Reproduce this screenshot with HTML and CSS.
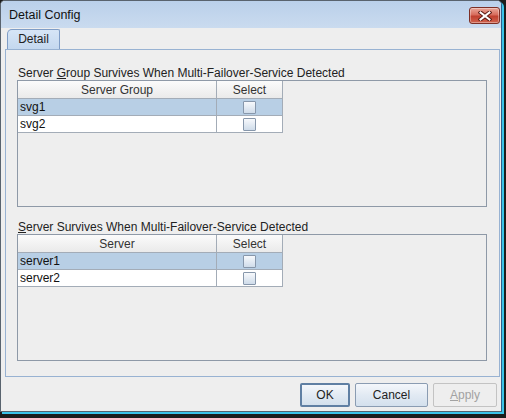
FILE: index.html
```html
<!DOCTYPE html>
<html>
<head>
<meta charset="utf-8">
<link rel="stylesheet" href="styles.css">
</head>
<body>
<div class="window">
  <div class="titlebar">
    <span class="title">Detail Config</span>
    <button class="close" aria-label="Close">
      <svg width="14" height="10" viewBox="0 0 14 10">
        <path d="M2.5 1.5 L11.5 8.5 M11.5 1.5 L2.5 8.5" stroke="#5a1a14" stroke-width="4" stroke-linecap="square" fill="none"/>
        <path d="M2.5 1.5 L11.5 8.5 M11.5 1.5 L2.5 8.5" stroke="#ffffff" stroke-width="2" stroke-linecap="square" fill="none"/>
      </svg>
    </button>
  </div>
  <div class="content">
    <div class="tabs">
      <div class="tab">Detail</div>
    </div>
    <div class="panel">
      <div class="label">Server <u>G</u>roup Survives When Multi-Failover-Service Detected</div>
      <div class="scroll">
        <div class="table">
          <div class="row head">
            <div class="cell c1">Server Group</div>
            <div class="cell c2">Select</div>
          </div>
          <div class="row sel">
            <div class="cell c1 left">svg1</div>
            <div class="cell c2"><span class="check"></span></div>
          </div>
          <div class="row">
            <div class="cell c1 left">svg2</div>
            <div class="cell c2"><span class="check"></span></div>
          </div>
        </div>
      </div>
      <div class="label second"><u>S</u>erver Survives When Multi-Failover-Service Detected</div>
      <div class="scroll">
        <div class="table">
          <div class="row head">
            <div class="cell c1">Server</div>
            <div class="cell c2">Select</div>
          </div>
          <div class="row sel">
            <div class="cell c1 left">server1</div>
            <div class="cell c2"><span class="check"></span></div>
          </div>
          <div class="row">
            <div class="cell c1 left">server2</div>
            <div class="cell c2"><span class="check"></span></div>
          </div>
        </div>
      </div>
    </div>
    <div class="buttons">
      <button class="btn default">OK</button>
      <button class="btn cancel">Cancel</button>
      <button class="btn disabled"><u>A</u>pply</button>
    </div>
  </div>
</div>
</body>
</html>
```
FILE: styles.css
```css
html, body {
  margin: 0;
  padding: 0;
}
body {
  width: 506px;
  height: 418px;
  background: #1c1c1c;
  font-family: "Liberation Sans", Arial, sans-serif;
  font-size: 12px;
  color: #222;
  overflow: hidden;
}
.window {
  width: 502px;
  height: 412px;
  box-sizing: border-box;
  border: 1px solid #59636e;
  border-right-color: #2e5f8c;
  border-radius: 5px 5px 0 0;
  box-shadow: 2px 2px 0 #3bc3e9;
  background: #eeeeee;
  display: flex;
  flex-direction: column;
  overflow: hidden;
}
.titlebar {
  height: 27px;
  flex: none;
  background: linear-gradient(#bad0ea, #cadbef);
  display: flex;
  align-items: flex-start;
  justify-content: space-between;
  padding-left: 8px;
  box-sizing: border-box;
}
.title {
  font-size: 12.5px;
  line-height: 15px;
  margin-top: 7px;
  color: #111;
}
.close {
  width: 31px;
  height: 17px;
  margin-top: 6px;
  margin-right: 1px;
  padding: 0;
  border: 1px solid #7d3026;
  border-radius: 3px;
  background: linear-gradient(#e9a89a, #d86c5c 45%, #c0402f 55%, #d0644f);
  display: flex;
  align-items: center;
  justify-content: center;
  box-shadow: inset 0 0 0 1px rgba(255,255,255,0.35);
}
.content {
  flex: 1;
  display: flex;
  flex-direction: column;
}
.tabs {
  height: 20px;
  padding-top: 1px;
  padding-left: 6px;
  display: flex;
  flex: none;
}
.tab {
  position: relative;
  z-index: 1;
  width: 53px;
  height: 20px;
  box-sizing: border-box;
  border: 1px solid #7f9dc6;
  border-bottom: none;
  border-radius: 5px 2px 0 0;
  background: linear-gradient(#d6e5f6, #c4d8ef);
  text-align: center;
  line-height: 18px;
  color: #222;
}
.panel {
  margin-left: 4px;
  width: 495px;
  height: 328px;
  box-sizing: border-box;
  border: 1px solid #98b2d2;
  padding: 16px 11px 15px 11px;
  display: flex;
  flex-direction: column;
  flex: none;
}
.label {
  height: 14px;
  line-height: 14px;
  padding-left: 1px;
  color: #222;
  white-space: nowrap;
}
.label.second {
  margin-top: 13px;
}
.scroll {
  width: 470px;
  height: 127px;
  box-sizing: border-box;
  border: 1px solid #8e99a7;
  background: #eeeeee;
}
.table {
  width: 265px;
  display: flex;
  flex-direction: column;
}
.row {
  display: flex;
  height: 17px;
  box-sizing: border-box;
  border-bottom: 1px solid #a3acb7;
  background: #ffffff;
}
.row.head {
  height: 18px;
  background: linear-gradient(#fbfbfb, #eaeaea);
  border-bottom: 1px solid #a3acb7;
}
.row.sel {
  background: #b8cfe5;
}
.cell {
  box-sizing: border-box;
  border-right: 1px solid #a3acb7;
  display: flex;
  align-items: center;
  justify-content: center;
  color: #222;
  white-space: nowrap;
}
.head .cell {
  color: #333;
}
.c1 {
  width: 199px;
}
.c2 {
  width: 66px;
}
.cell.left {
  justify-content: flex-start;
  padding-left: 2px;
  color: #111;
}
.check {
  width: 13px;
  height: 13px;
  box-sizing: border-box;
  border: 1px solid #8797ab;
  border-radius: 1px;
  background: linear-gradient(#f7f9fc, #cfdcea);
  display: block;
}
.buttons {
  display: flex;
  justify-content: flex-end;
  gap: 5px;
  padding: 6px 4px 0 0;
}
.btn {
  height: 24px;
  box-sizing: border-box;
  padding: 0;
  font-family: "Liberation Sans", Arial, sans-serif;
  font-size: 12px;
  color: #222;
  border: 1px solid #8a9cb2;
  border-radius: 2px;
  background: linear-gradient(#f4f7fb, #e2eaf3 50%, #d3e0ed);
}
.btn.default {
  width: 50px;
  border: 2px solid #5f7fa3;
}
.btn.cancel {
  width: 73px;
}
.btn.disabled {
  width: 64px;
  border-color: #c3c3c3;
  background: #eeeeee;
  color: #a2a2a2;
}
```
